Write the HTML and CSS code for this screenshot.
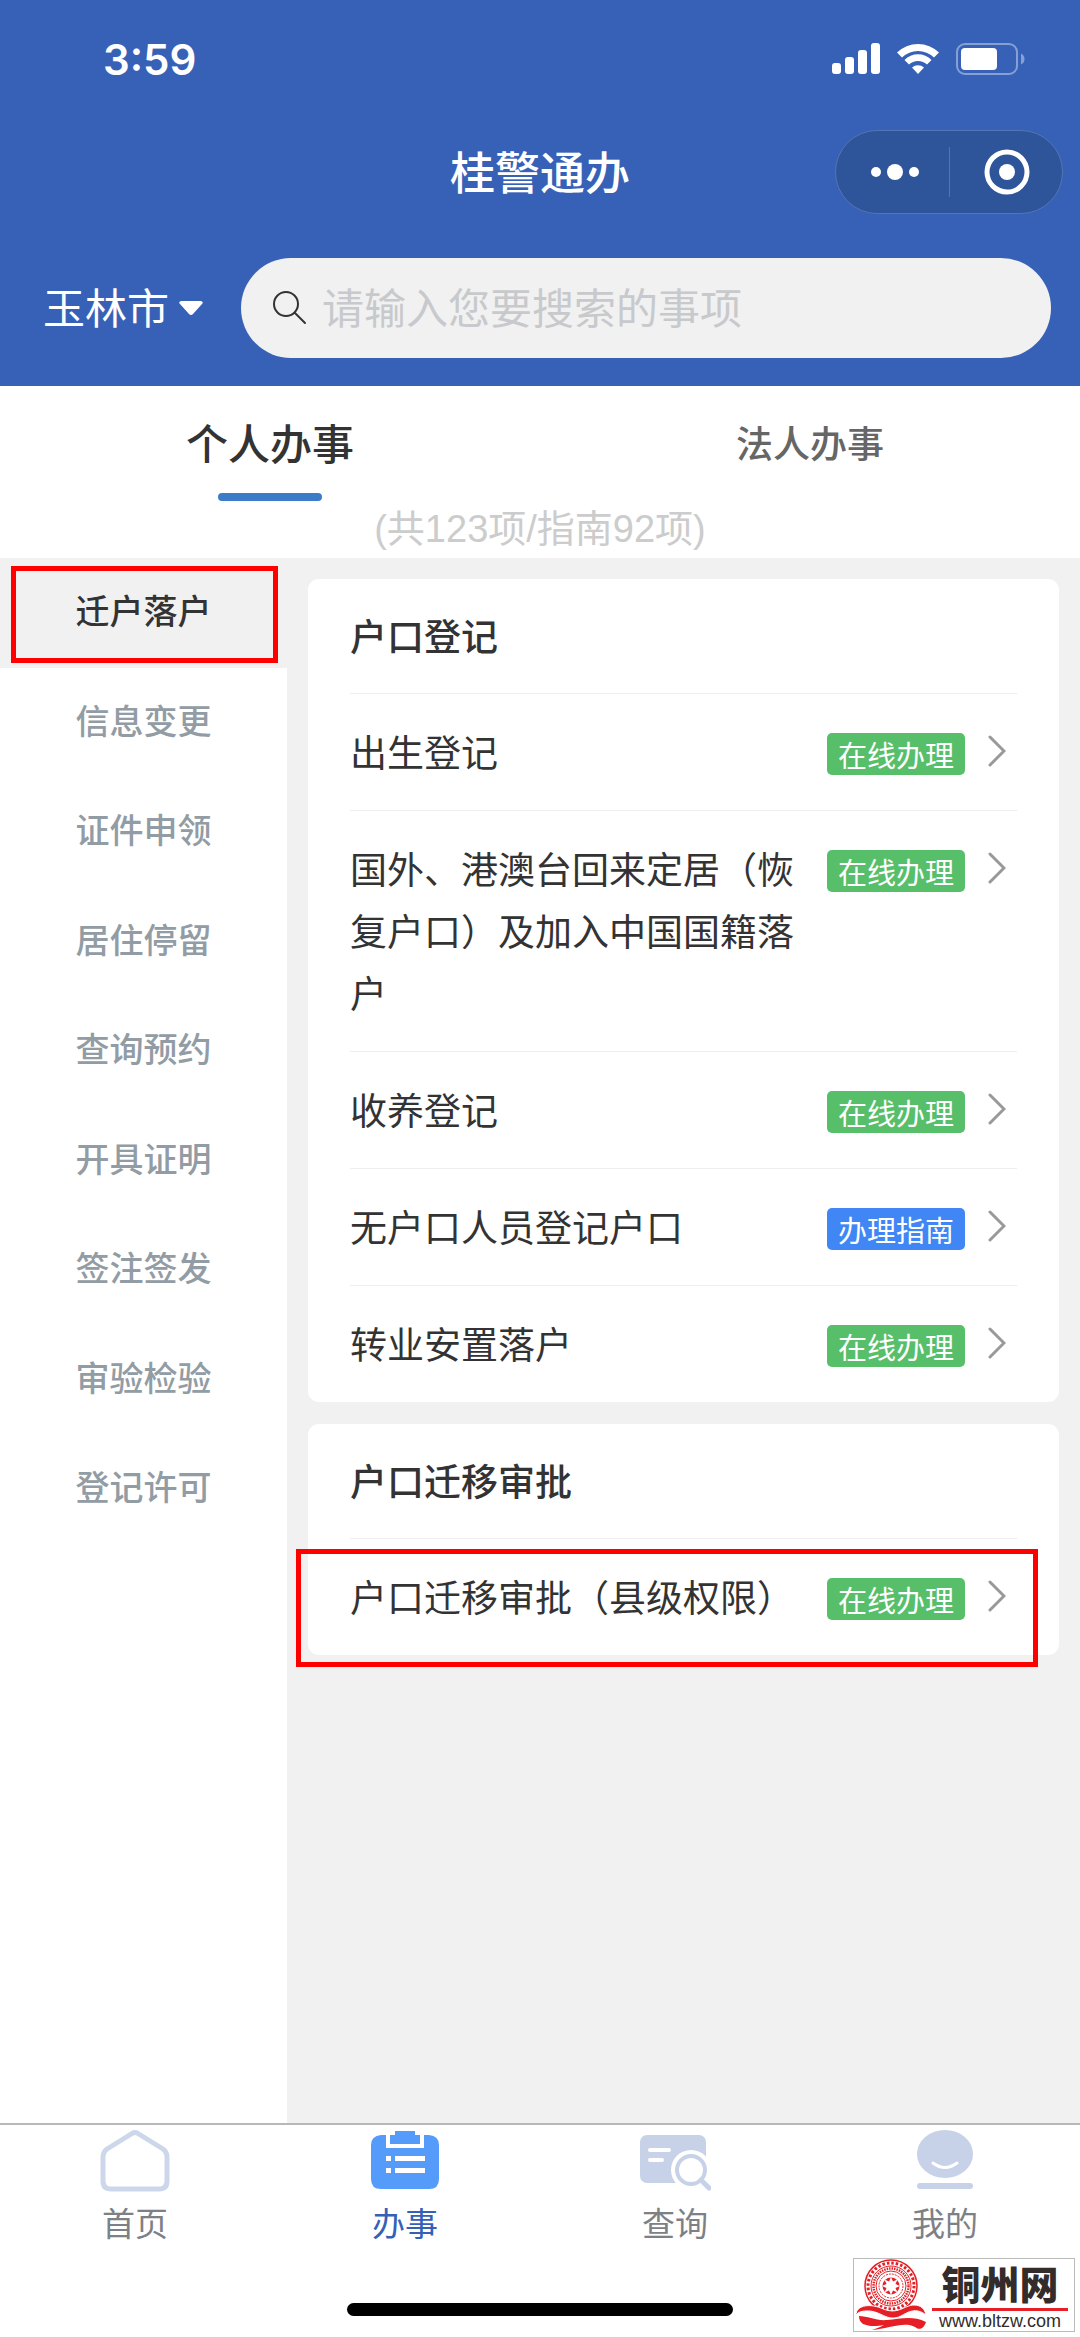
FILE: index.html
```html
<!DOCTYPE html>
<html lang="zh-CN">
<head>
    <meta charset="UTF-8">
    <meta name="viewport" content="width=device-width, initial-scale=1.0">
    <title>桂警通办</title>
    <link rel="stylesheet" href="styles.css">
</head>
<body>
    <header class="header">
        <div class="status-bar">
            <span class="time">3:59</span>
            <div class="status-icons">
                <svg width="48" height="32" viewBox="0 0 48 32" fill="#fff">
                    <rect x="0" y="20" width="9" height="11" rx="3"/>
                    <rect x="13" y="14" width="9" height="17" rx="3"/>
                    <rect x="26" y="7" width="9" height="24" rx="3"/>
                    <rect x="39" y="0" width="9" height="31" rx="3"/>
                </svg>
                <svg width="42" height="32" viewBox="0 0 42 32" fill="#fff">
                    <path d="M0 9.500A30 30 0 0 1 42 9.500L37 14.500A23 23 0 0 0 5 14.500Z"/>
                    <path d="M7.500 17A19 19 0 0 1 34.500 17L30 21.500A13 13 0 0 0 12 21.500Z"/>
                    <path d="M15 24.500A9 9 0 0 1 27 24.500L21 31Z"/>
                </svg>
                <svg width="69" height="34" viewBox="0 0 69 34">
                    <rect x="1" y="2" width="60" height="30" rx="8" fill="none" stroke="#fff" stroke-opacity="0.400" stroke-width="2"/>
                    <rect x="5" y="6" width="36" height="22" rx="4" fill="#fff"/>
                    <path d="M65 11.500Q68.500 13 68.500 17Q68.500 21 65 22.500Z" fill="#fff" fill-opacity="0.400"/>
                </svg>
            </div>
        </div>

        <div class="nav-bar">
            <h1 class="nav-title">桂警通办</h1>
            <div class="capsule">
                <button type="button" aria-label="更多">
                    <svg width="50" height="20" viewBox="0 0 50 20" fill="#fff">
                        <circle cx="6" cy="10" r="5"/>
                        <circle cx="25" cy="10" r="8"/>
                        <circle cx="44" cy="10" r="5"/>
                    </svg>
                </button>
                <button type="button" aria-label="关闭">
                    <svg width="46" height="46" viewBox="0 0 46 46">
                        <circle cx="23" cy="23" r="20" fill="none" stroke="#fff" stroke-width="5"/>
                        <circle cx="23" cy="23" r="8" fill="#fff"/>
                    </svg>
                </button>
            </div>
        </div>

        <form class="search-row">
            <label class="city">
                <select aria-label="城市">
                    <option>玉林市</option>
                </select>
                <svg width="24" height="14" viewBox="0 0 24 14"><path d="M2 0H22Q25 1 23 3L14 13Q12 15 10 13L1 3Q-1 1 2 0Z" fill="#fff"/></svg>
            </label>
            <div class="search-box">
                <svg width="34" height="34" viewBox="0 0 34 34" fill="none" stroke="#333" stroke-width="2" stroke-linecap="round">
                    <circle cx="13" cy="13" r="12"/>
                    <path d="M22 22L32 32"/>
                </svg>
                <input type="text" aria-label="搜索" placeholder="请输入您要搜索的事项">
            </div>
        </form>
    </header>

    <div class="tabs">
        <button type="button" class="tab active">个人办事</button>
        <button type="button" class="tab">法人办事</button>
    </div>
    <p class="count">(共123项/指南92项)</p>

    <main class="content">
        <nav class="sidebar">
            <ul>
                <li><a href="#" class="active marked">迁户落户</a></li>
                <li><a href="#">信息变更</a></li>
                <li><a href="#">证件申领</a></li>
                <li><a href="#">居住停留</a></li>
                <li><a href="#">查询预约</a></li>
                <li><a href="#">开具证明</a></li>
                <li><a href="#">签注签发</a></li>
                <li><a href="#">审验检验</a></li>
                <li><a href="#">登记许可</a></li>
            </ul>
        </nav>

        <div class="cards">
            <section class="card">
                <h2>户口登记</h2>
                <a href="#" class="item">
                    <span class="name">出生登记</span>
                    <span class="tag">在线办理</span>
                    <svg class="arrow" viewBox="0 0 18 32"><path d="M2 2L16 16L2 30"/></svg>
                </a>
                <a href="#" class="item">
                    <span class="name">国外、港澳台回来定居（恢复户口）及加入中国国籍落户</span>
                    <span class="tag">在线办理</span>
                    <svg class="arrow" viewBox="0 0 18 32"><path d="M2 2L16 16L2 30"/></svg>
                </a>
                <a href="#" class="item">
                    <span class="name">收养登记</span>
                    <span class="tag">在线办理</span>
                    <svg class="arrow" viewBox="0 0 18 32"><path d="M2 2L16 16L2 30"/></svg>
                </a>
                <a href="#" class="item">
                    <span class="name">无户口人员登记户口</span>
                    <span class="tag guide">办理指南</span>
                    <svg class="arrow" viewBox="0 0 18 32"><path d="M2 2L16 16L2 30"/></svg>
                </a>
                <a href="#" class="item">
                    <span class="name">转业安置落户</span>
                    <span class="tag">在线办理</span>
                    <svg class="arrow" viewBox="0 0 18 32"><path d="M2 2L16 16L2 30"/></svg>
                </a>
            </section>

            <section class="card">
                <h2>户口迁移审批</h2>
                <a href="#" class="item marked">
                    <span class="name">户口迁移审批（县级权限）</span>
                    <span class="tag">在线办理</span>
                    <svg class="arrow" viewBox="0 0 18 32"><path d="M2 2L16 16L2 30"/></svg>
                </a>
            </section>
        </div>
    </main>

    <footer class="footer">
        <nav class="tab-bar">
            <a href="#">
                <svg width="72" height="64" viewBox="0 0 72 64" fill="none" stroke="#cdd7eb" stroke-width="5" stroke-linejoin="round">
                    <path d="M33 4.500Q36 2.500 39 4.500L64 20Q68 23 68 28V52Q68 60 60 60H12Q4 60 4 52V28Q4 23 8 20Z"/>
                </svg>
                首页
            </a>
            <a href="#" class="active">
                <svg width="72" height="64" viewBox="0 0 72 64" fill="#559bfa">
                    <path d="M12 6H17V19H55V6H60Q70 7 70 16V50Q70 60 60 60H12Q2 60 2 50V16Q2 7 12 6Z"/>
                    <path d="M26 2H46V6H51V15H21V6H26Z"/>
                    <path d="M17 27H22V32H17ZM26 27H56V32H26ZM17 39H22V44H17ZM26 39H56V44H26Z" fill="#fff"/>
                </svg>
                办事
            </a>
            <a href="#">
                <svg width="72" height="64" viewBox="0 0 72 64">
                    <rect x="1" y="6" width="66" height="48" rx="7" fill="#c7d2e8"/>
                    <path d="M11 21H30M11 31H23" stroke="#fff" stroke-width="4" stroke-linecap="round"/>
                    <circle cx="52" cy="41" r="20" fill="#fff"/>
                    <circle cx="52" cy="41" r="14" fill="none" stroke="#c7d2e8" stroke-width="4"/>
                    <path d="M62 51L70 59" stroke="#c7d2e8" stroke-width="5" stroke-linecap="round"/>
                </svg>
                查询
            </a>
            <a href="#">
                <svg width="72" height="64" viewBox="0 0 72 64">
                    <ellipse cx="36" cy="25" rx="28" ry="24" fill="#c7d2e8"/>
                    <path d="M24 34Q36 43 48 34" fill="none" stroke="#fff" stroke-width="3" stroke-linecap="round"/>
                    <path d="M11 57H61" stroke="#c7d2e8" stroke-width="6" stroke-linecap="round"/>
                </svg>
                我的
            </a>
        </nav>
        <div class="home-indicator"></div>

        <a href="#" class="site-badge">
            <svg width="72" height="72" viewBox="0 0 72 72" fill="none" stroke="#e61f26">
                <circle cx="37" cy="27" r="26" stroke-width="1.500"/>
                <circle cx="37" cy="27" r="23" stroke-width="3" stroke-dasharray="2.500 2"/>
                <circle cx="37" cy="27" r="20"/>
                <circle cx="37" cy="27" r="17.500" stroke-width="2.500" stroke-dasharray="1.500 1"/>
                <circle cx="37" cy="27" r="15"/>
                <circle cx="37" cy="27" r="12" stroke-dasharray="2 1"/>
                <circle cx="37" cy="27" r="8.500" fill="#e61f26" stroke="none"/>
                <path d="M37 18L39 22.500L43.500 20.500L41.500 25L46 27L41.500 29L43.500 33.500L39 31.500L37 36L35 31.500L30.500 33.500L32.500 29L28 27L32.500 25L30.500 20.500L35 22.500Z" fill="#fff" stroke="none"/>
                <path d="M2 56C2 47 14 44 27 49C44 57 50 46 60 46C67 46 71 50 72 56C62 48 54 53 47 57C33 64 27 51 12 52C8 52 4 53 2 56Z" fill="#e61f26" stroke="#fff" stroke-width="1"/>
                <path d="M5 57C14 57 22 62 33 61C46 60 58 56 72 63C70 69 66 72 61 68C50 62 34 70 18 71C24 69 28 67 30 66C20 68 14 67 9 65C6 63 5 60 5 57Z" fill="#e61f26" stroke="none"/>
            </svg>
            <span class="badge-text">
                <strong>铜州网</strong>
                <small>www.bltzw.com</small>
            </span>
        </a>
    </footer>
</body>
</html>
```
FILE: styles.css
```css
* {
    box-sizing: border-box;
    margin: 0;
    padding: 0;
}

body {
    display: flex;
    flex-direction: column;
    min-height: 100vh;
    font-family: "Noto Sans CJK SC", sans-serif;
    color: #333;
    background-color: #fff;
}

a {
    color: inherit;
    text-decoration: none;
}

button,
select,
input {
    border: none;
    outline: none;
    background: none;
    font-family: inherit;
    color: inherit;
}

svg {
    display: block;
    flex-shrink: 0;
}

/* header */
.header {
    background-color: #3761b7;
    color: #fff;
}

.status-bar {
    display: flex;
    align-items: center;
    justify-content: space-between;
    height: 118px;
    padding: 0 55px 0 103px;
}

.time {
    font-family: Inter, sans-serif;
    font-size: 42px;
    font-weight: 600;
}

.status-icons {
    display: flex;
    align-items: center;
    gap: 17px;
}

.nav-bar {
    display: grid;
    grid-template-columns: 1fr auto 1fr;
    align-items: center;
    height: 108px;
    padding: 0 17px;
}

.nav-title {
    grid-column: 2;
    padding-bottom: 2px;
    font-size: 45px;
    font-weight: 500;
    line-height: 60px;
}

.capsule {
    display: grid;
    grid-template-columns: 1fr 1fr;
    justify-self: end;
    width: 228px;
    height: 84px;
    border: 1px solid #5375b3;
    border-radius: 42px;
    background-color: #2e5499;
}

.capsule button {
    display: flex;
    align-items: center;
    justify-content: center;
    height: 50px;
    margin: 16px 0;
    padding-left: 4px;
}

.capsule button + button {
    padding-left: 1px;
    border-left: 1px solid #5375b3;
}

.search-row {
    display: flex;
    align-items: center;
    padding: 32px 29px 28px 43px;
    gap: 38px;
}

.city {
    display: flex;
    align-items: center;
    gap: 9px;
}

.city select {
    appearance: none;
    padding-bottom: 4px;
    font-size: 42px;
    line-height: 60px;
}

.search-box {
    display: flex;
    flex: 1;
    align-items: center;
    gap: 15px;
    height: 100px;
    padding: 0 32px;
    border-radius: 50px;
    background-color: #f1f1f1;
}

.search-box input {
    flex: 1;
    min-width: 0;
    padding-bottom: 6px;
    font-size: 42px;
    color: #333;
}

.search-box input::placeholder {
    color: #c8c9cc;
}

/* tabs */
.tabs {
    display: grid;
    grid-template-columns: 1fr 1fr;
}

.tab {
    padding: 26px 0 0;
    font-size: 37px;
    font-weight: 500;
    line-height: 60px;
    color: #666;
}

.tab::after {
    content: "";
    display: block;
    width: 104px;
    height: 8px;
    margin: 21px auto 0;
    border-radius: 4px;
}

.tab.active {
    font-size: 42px;
    color: #333;
}

.tab.active::after {
    background-color: #3a7cc8;
}

.count {
    font-family: "Liberation Sans", "Noto Sans CJK SC", sans-serif;
    font-size: 38px;
    line-height: 57px;
    text-align: center;
    color: #ccc;
}

/* content */
.content {
    display: flex;
    flex: 1;
    background-color: #f1f1f1;
}

.sidebar {
    width: 287px;
    background-color: #fff;
}

.sidebar ul {
    display: grid;
    grid-auto-rows: 1fr;
    min-height: 986px;
    list-style-type: none;
}

.sidebar li {
    display: grid;
}

.sidebar a {
    padding: 27px 0;
    font-size: 34px;
    font-weight: 500;
    line-height: 50px;
    text-align: center;
    color: #929ca4;
}

.sidebar a.active {
    color: #333;
    background-color: #f1f1f1;
}

/* red highlight frames */
.marked {
    position: relative;
}

.marked::after {
    content: "";
    position: absolute;
    border: 5px solid #f00;
}

.sidebar .marked::after {
    inset: 8px 9px 5px 11px;
}

.item.marked::after {
    inset: 10px -21px -12px -54px;
}

.cards {
    display: flex;
    flex: 1;
    flex-direction: column;
    gap: 22px;
    min-width: 0;
    padding: 21px;
}

.card {
    padding: 0 42px;
    border-radius: 11px;
    background-color: #fff;
}

.card h2 {
    padding: 25px 0 27px;
    font-size: 37px;
    font-weight: 500;
    line-height: 62px;
}

.item {
    display: flex;
    align-items: flex-start;
    padding: 26px 0 28px;
    border-top: 1px solid #eee;
}

.name {
    flex: 1;
    font-size: 37px;
    line-height: 62px;
}

.tag {
    margin: 13px 23px 0 20px;
    padding: 0 11px;
    border-radius: 5px;
    font-size: 29px;
    line-height: 42px;
    color: #fff;
    background-color: #57be6a;
}

.tag.guide {
    background-color: #4086f4;
}

.arrow {
    width: 18px;
    height: 32px;
    margin: 15px 11px 0 0;
    fill: none;
    stroke: #999;
    stroke-width: 3;
    stroke-linecap: round;
}

/* footer */
.footer {
    position: relative;
    border-top: 2px solid #b8b8b8;
    background-color: #fff;
}

.tab-bar {
    display: grid;
    grid-template-columns: repeat(4, 1fr);
    padding-top: 4px;
}

.tab-bar a {
    display: flex;
    flex-direction: column;
    align-items: center;
    gap: 4px;
    font-size: 33px;
    line-height: 50px;
    color: #7d8186;
}

.tab-bar a.active {
    color: #3560b8;
}

.home-indicator {
    width: 386px;
    height: 13px;
    margin: 56px auto 21px;
    border-radius: 7px;
    background-color: #000;
}

.site-badge {
    position: absolute;
    right: 5px;
    bottom: 5px;
    display: flex;
    width: 222px;
    height: 74px;
    border: 1px solid #bbb;
    background-color: #fff;
    color: #332c2b;
}

.badge-text {
    display: flex;
    flex: 1;
    flex-direction: column;
    align-items: center;
    margin: 3px 6px 0;
}

.badge-text strong {
    align-self: stretch;
    padding-bottom: 6px;
    border-bottom: 3px solid #e61f26;
    font-size: 39px;
    font-weight: 900;
    line-height: 40px;
    text-align: center;
}

.badge-text small {
    font-family: "Liberation Sans", sans-serif;
    font-size: 18px;
    line-height: 20px;
}
```
